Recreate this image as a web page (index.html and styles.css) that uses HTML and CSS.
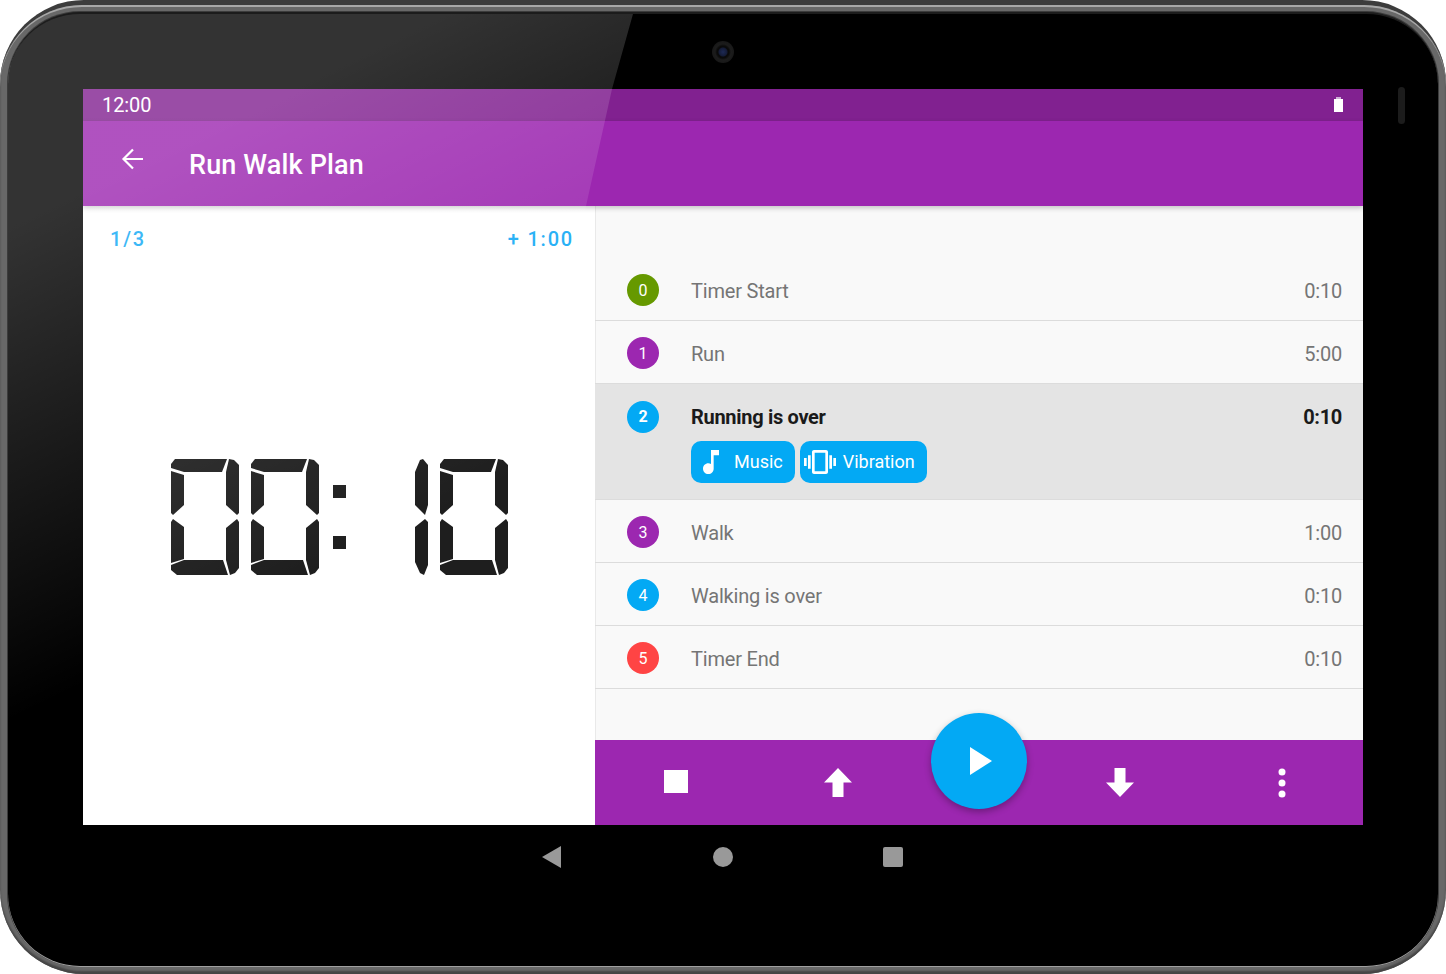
FILE: index.html
```html
<!DOCTYPE html>
<html lang="en">
<head>
  <meta charset="UTF-8" />
  <meta name="viewport" content="width=device-width, initial-scale=1.0" />
  <title>Run Walk Plan</title>
  <link rel="stylesheet" href="styles.css">
</head>
<body>
  <div class="device">
    <div class="rim">
      <div class="bezel">
        <div class="camera"></div>
        <div class="sensor"></div>

        <div class="screen">
          <div class="status-bar">
            <span class="status-time">12:00</span>
            <span class="battery"></span>
          </div>

          <header class="app-bar">
            <svg class="back-icon" viewBox="0 0 32 32" width="32" height="32">
              <path d="M27 16H8M17 6.500L7.500 16l9.500 9.500" fill="none" stroke="#fff" stroke-width="2.200" />
            </svg>
            <h1 class="app-title">Run Walk Plan</h1>
          </header>

          <main class="content">
            <section class="timer-panel">
              <div class="timer-info">
                <span>1/3</span>
                <span>+ 1:00</span>
              </div>
              <!-- seven segment clock, segments cut out with clip-path -->
              <div class="clock" role="timer" aria-label="00:10">
                <div class="digit"><i class="seg seg-a"></i><i class="seg seg-b"></i><i class="seg seg-c"></i><i class="seg seg-d"></i><i class="seg seg-e"></i><i class="seg seg-f"></i></div>
                <div class="digit"><i class="seg seg-a"></i><i class="seg seg-b"></i><i class="seg seg-c"></i><i class="seg seg-d"></i><i class="seg seg-e"></i><i class="seg seg-f"></i></div>
                <div class="colon"><i></i><i></i></div>
                <div class="digit-one"><i class="seg seg-one-top"></i><i class="seg seg-one-bottom"></i></div>
                <div class="digit"><i class="seg seg-a"></i><i class="seg seg-b"></i><i class="seg seg-c"></i><i class="seg seg-d"></i><i class="seg seg-e"></i><i class="seg seg-f"></i></div>
              </div>
            </section>

            <section class="plan-panel">
              <div class="step-list">
                <div class="step">
                  <span class="badge badge-green">0</span>
                  <span class="step-name">Timer Start</span>
                  <span class="step-time">0:10</span>
                </div>
                <div class="step">
                  <span class="badge badge-purple">1</span>
                  <span class="step-name">Run</span>
                  <span class="step-time">5:00</span>
                </div>
                <div class="step step-active">
                  <span class="badge badge-blue">2</span>
                  <div class="step-body">
                    <span class="step-name">Running is over</span>
                    <div class="chips">
                      <span class="chip chip-music">
                        <svg viewBox="0 0 24 24" width="32" height="32"><path fill="#fff" d="M12 3v10.55c-.59-.34-1.27-.55-2-.55-2.21 0-4 1.79-4 4s1.79 4 4 4 4-1.79 4-4V7h4V3h-6z" /></svg>
                        Music
                      </span>
                      <span class="chip chip-vibration">
                        <svg viewBox="0 0 24 24" width="32" height="32"><path fill="#fff" d="M0 15h2V9H0v6zm3 2h2V7H3v10zm19-8v6h2V9h-2zm-3 8h2V7h-2v10zM16.5 3h-9C6.67 3 6 3.67 6 4.5v15c0 .83.67 1.5 1.5 1.5h9c.83 0 1.5-.67 1.5-1.5v-15c0-.83-.67-1.5-1.5-1.5zM16 19H8V5h8v14z" /></svg>
                        Vibration
                      </span>
                    </div>
                  </div>
                  <span class="step-time">0:10</span>
                </div>
                <div class="step">
                  <span class="badge badge-purple">3</span>
                  <span class="step-name">Walk</span>
                  <span class="step-time">1:00</span>
                </div>
                <div class="step">
                  <span class="badge badge-blue">4</span>
                  <span class="step-name">Walking is over</span>
                  <span class="step-time">0:10</span>
                </div>
                <div class="step">
                  <span class="badge badge-red">5</span>
                  <span class="step-name">Timer End</span>
                  <span class="step-time">0:10</span>
                </div>
              </div>

              <div class="control-bar">
                <div class="control"><span class="stop-icon"></span></div>
                <div class="control">
                  <svg viewBox="0 0 28 29" width="28" height="29"><path fill="#fff" d="M14 0l14 14.500h-8.500V29H8.500V14.500H0z" /></svg>
                </div>
                <div class="control control-fab">
                  <button class="fab">
                    <svg viewBox="0 0 22 28" width="22" height="28"><path fill="#fff" d="M0 0l22 14L0 28z" /></svg>
                  </button>
                </div>
                <div class="control">
                  <svg viewBox="0 0 28 29" width="28" height="29"><path fill="#fff" d="M8.500 0h11v14.500H28L14 29 0 14.500h8.500z" /></svg>
                </div>
                <div class="control">
                  <svg viewBox="0 0 8 30" width="8" height="30"><circle cx="4" cy="4" r="3.500" fill="#fff" /><circle cx="4" cy="15" r="3.500" fill="#fff" /><circle cx="4" cy="26" r="3.500" fill="#fff" /></svg>
                </div>
              </div>
            </section>
          </main>

          <nav class="nav-bar">
            <div class="nav-item"><span class="nav-back"></span></div>
            <div class="nav-item"><span class="nav-home"></span></div>
            <div class="nav-item"><span class="nav-recent"></span></div>
          </nav>
        </div>

        <div class="gloss"></div>
      </div>
    </div>
  </div>
</body>
</html>
```

FILE: styles.css
```css
* { box-sizing: border-box; }
html, body { margin: 0; padding: 0; background: #fff; }
body { font-family: Roboto, "Noto Sans", sans-serif; }

/* tablet frame, top borders taper off round the corners */
.device {
  width: 1446px;
  height: 974px;
  border-top: 5px solid #3c3c3c;
  border-radius: 84px;
  background: #686868;
  box-shadow: inset 0 -3px 2px #454545;
}
.rim {
  height: 100%;
  padding: 5px 8px 8px;
  border-top: 2px solid #a8a8a8;
  border-radius: 82px;
}
.bezel {
  position: relative;
  height: 100%;
  padding: 75px 75px 0;
  border-top: 2px solid #1c1c1c;
  border-radius: 72px;
  background: #000;
  box-shadow: 0 1px 0 #a0a0a0, 0 0 0 1px #3c3c3c;
  overflow: hidden;
}
.camera {
  position: absolute;
  left: 704px;
  top: 27px;
  width: 22px;
  height: 22px;
  border-radius: 50%;
  background: radial-gradient(circle, #1d2a55 0, #141b36 4px, #0a0a0a 5px, #0a0a0a 6px, #1c1c1c 8px, #181818 11px);
}
.sensor {
  position: absolute;
  left: 1390px;
  top: 73px;
  width: 7px;
  height: 37px;
  border-radius: 4px;
  background: #1c1c1c;
}
.gloss {
  position: absolute;
  z-index: 3;
  left: 0;
  top: 0;
  width: 100%;
  height: 100%;
  pointer-events: none;
  background: linear-gradient(154deg, rgba(255,255,255,0.2) 13%, rgba(255,255,255,0) 43%);
  clip-path: polygon(0 0, 625px 0, 604px 75px, 578px 192px, 427px 811px, 0 811px);
}

/* screen */
.screen { display: flex; flex-direction: column; width: 1280px; height: 800px; }
.status-bar {
  display: flex;
  align-items: center;
  justify-content: space-between;
  height: 32px;
  flex: none;
  padding: 0 20px 0 19px;
  background: #812190;
  color: #fff;
}
.status-time { font-size: 20px; letter-spacing: -0.1px; }
.battery {
  position: relative;
  width: 9px;
  height: 13px;
  margin-top: 1px;
  background: #fff;
}
.battery::before {
  content: "";
  position: absolute;
  left: 2px;
  top: -2px;
  width: 5px;
  height: 2px;
  background: #cdb0d5;
}
.app-bar {
  position: relative;
  z-index: 2;
  display: flex;
  align-items: center;
  gap: 41px;
  height: 85px;
  flex: none;
  padding-left: 33px;
  background: #9c27b0;
  box-shadow: 0 2px 5px rgba(0,0,0,0.22);
}
.back-icon { margin-bottom: 9px; }
.app-title { margin: 2px 0 0; font-size: 27px; font-weight: 500; letter-spacing: 0.15px; color: #fff; }
.content { display: flex; flex: 1; min-height: 0; }
.nav-bar { display: flex; justify-content: center; height: 64px; flex: none; background: #000; }
.nav-item { display: flex; align-items: center; justify-content: center; width: 170px; }
.nav-back {
  width: 19px;
  height: 22px;
  margin-right: 3px;
  background: #999;
  clip-path: polygon(100% 0, 100% 100%, 0 50%);
}
.nav-home { width: 20px; height: 20px; border-radius: 50%; background: #999; }
.nav-recent { width: 20px; height: 20px; border-radius: 2px; background: #999; }

/* left panel */
.timer-panel { width: 512px; flex: none; background: #fff; }
.timer-info {
  display: flex;
  justify-content: space-between;
  height: 53px;
  padding: 21px 21px 0 27px;
  font-size: 20px;
  font-weight: 500;
  line-height: 24px;
  letter-spacing: 1.8px;
  color: #14aaf5;
}
.clock { display: flex; gap: 12px; margin: 200px 0 0 88px; }
.digit { display: grid; width: 68px; height: 116px; }
.digit-one { display: grid; width: 68px; height: 116px; padding-left: 55px; }
.seg { grid-area: 1 / 1; background: #1e1e1e; }
.seg-a { clip-path: polygon(0 9px, 0 5px, 4px 0, 56px 0, 51px 13px, 13px 13px); }
.seg-b { clip-path: polygon(58px 0, 63px 1px, 68px 6px, 68px 54px, 66px 56px, 55px 46px, 55px 13px); }
.seg-c { clip-path: polygon(68px 63px, 66px 60px, 55px 69px, 55px 101px, 59px 116px, 64px 114px, 68px 109px); }
.seg-d { clip-path: polygon(0 106px, 13px 101px, 52px 101px, 57px 116px, 6px 116px, 0 111px); }
.seg-e { clip-path: polygon(0 63px, 2px 60px, 13px 68px, 13px 100px, 0 104px); }
.seg-f { clip-path: polygon(0 12px, 13px 16px, 13px 46px, 2px 56px, 0 54px); }
.seg-one-top { clip-path: polygon(0 13px, 5px 1px, 8px 0, 13px 6px, 13px 46px, 10px 56px, 0 46px); }
.seg-one-bottom { clip-path: polygon(0 68px, 10px 60px, 13px 63px, 13px 106px, 9px 116px, 5px 114px, 0 103px); }
.colon {
  display: flex;
  flex-direction: column;
  align-items: center;
  gap: 38px;
  width: 17px;
  padding-top: 26px;
}
.colon i { width: 13px; height: 13px; background: #1e1e1e; }

/* right panel */
.plan-panel {
  display: flex;
  flex-direction: column;
  flex: 1;
  min-width: 0;
  background: #f9f9f9;
  box-shadow: inset 1px 0 0 #e9e9e9;
}
.step-list { flex: 1; padding-top: 52px; }
.step {
  display: flex;
  align-items: flex-start;
  height: 63px;
  padding: 16px 21px 0 32px;
  border-bottom: 1px solid #dcdcdc;
  font-size: 20px;
  line-height: 34px;
  letter-spacing: -0.2px;
  color: #757575;
}
.step-name { flex: 1; }
.step-time { flex: none; }
.badge {
  display: flex;
  align-items: center;
  justify-content: center;
  flex: none;
  width: 32px;
  height: 32px;
  margin-right: 32px;
  padding-top: 1px;
  border-radius: 50%;
  font-size: 16px;
  letter-spacing: 0;
  color: #fff;
}
.badge-green { background: #669900; }
.badge-purple { background: #9c27b0; }
.badge-blue { background: #03a9f4; }
.badge-red { background: #ff4444; }
.step-active {
  height: 116px;
  padding-top: 17px;
  background: #e4e4e4;
  font-weight: 700;
  line-height: 32px;
  letter-spacing: -0.3px;
  color: #1a1a1a;
}
.step-active .badge { padding-top: 0; }
.step-body { flex: 1; }
.chips { display: flex; gap: 5px; margin-top: 8px; font-size: 18px; font-weight: 400; letter-spacing: 0; color: #fff; }
.chip {
  display: flex;
  align-items: center;
  height: 42px;
  border-radius: 10px;
  background: #03a9f4;
}
.chip-music { gap: 7px; padding: 0 12px 0 4px; }
.chip-vibration { gap: 7px; padding: 0 12px 0 4px; }

/* bottom controls */
.control-bar {
  display: grid;
  grid-template-columns: 162px 162px 120px 161px 163px;
  height: 85px;
  flex: none;
  background: #9c27b0;
}
.control { display: flex; align-items: center; justify-content: center; }
.control-fab { align-items: flex-start; }
.stop-icon { width: 24px; height: 23px; margin-bottom: 2px; background: #fff; }
.fab {
  display: flex;
  align-items: center;
  justify-content: center;
  flex: none;
  width: 96px;
  height: 96px;
  margin-top: -27px;
  padding: 0 0 0 4px;
  border: none;
  border-radius: 50%;
  background: #03a9f4;
  box-shadow: 0 3px 7px rgba(0,0,0,0.3);
}
```
